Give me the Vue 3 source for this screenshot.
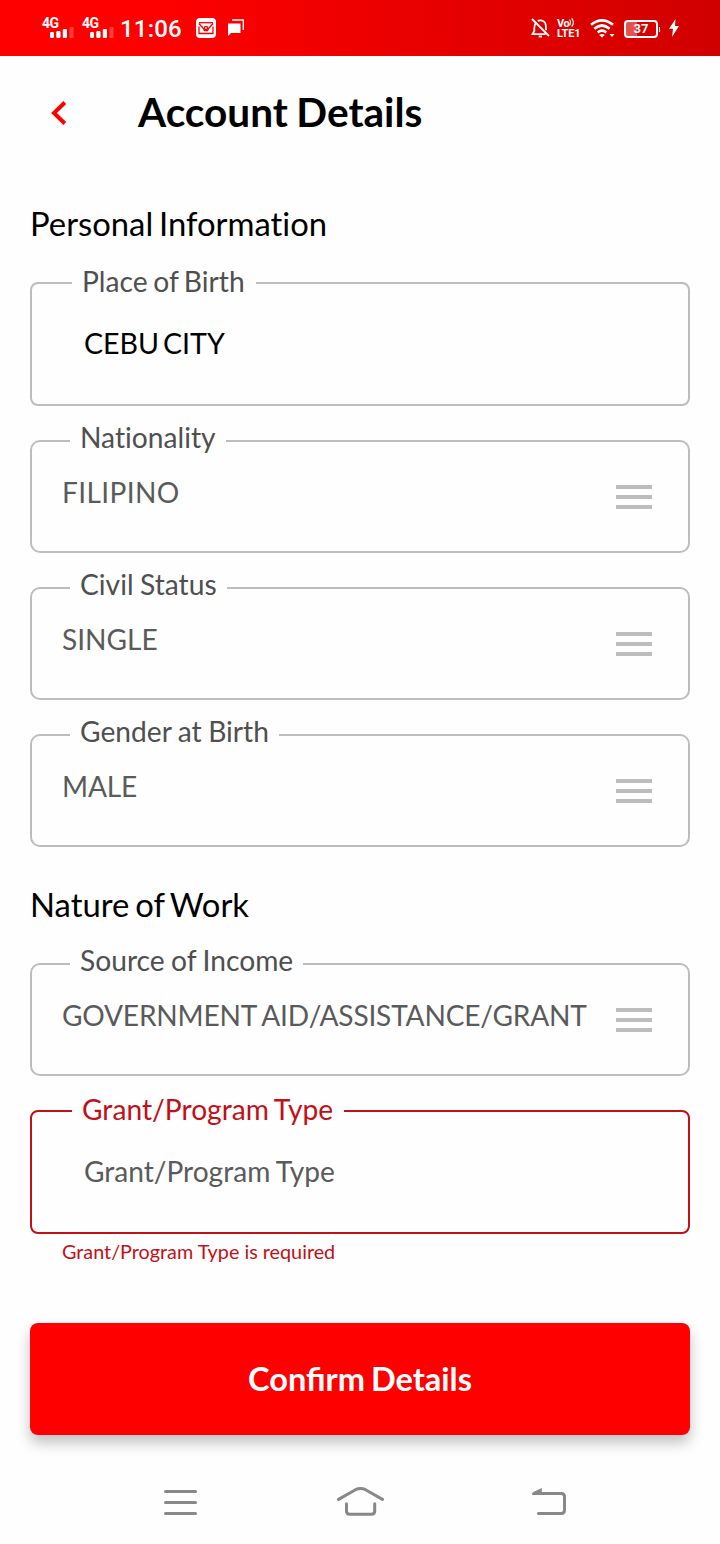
<script setup>
const personal = [
  { kind: 'input', label: 'Place of Birth', value: 'CEBU CITY', filled: true },
  { kind: 'select', label: 'Nationality', value: 'FILIPINO', tracking: 0.36 },
  { kind: 'select', label: 'Civil Status', value: 'SINGLE' },
  { kind: 'select', label: 'Gender at Birth', value: 'MALE', tracking: -0.2 },
]
const work = [
  { kind: 'select', label: 'Source of Income', value: 'GOVERNMENT AID/ASSISTANCE/GRANT', tracking: -0.2 },
  { kind: 'input', label: 'Grant/Program Type', value: 'Grant/Program Type', error: 'Grant/Program Type is required' },
]
const sections = [
  { title: 'Personal Information', fields: personal },
  { title: 'Nature of Work', fields: work },
]
</script>

<template>
  <div class="screen">
    <div class="status">
      <div v-for="n in 2" :key="n" class="signal">
        <span class="net">4G</span>
        <svg class="bars" width="24" height="11" viewBox="0 0 24 11" fill="#fff">
          <rect x="0" y="5" width="4" height="6" rx="1.2" />
          <rect x="6.3" y="4" width="4.2" height="7" rx="1.2" />
          <rect x="12.8" y="2" width="4.2" height="9" rx="1.2" />
          <rect x="19.5" y="0" width="4" height="11" rx="1.2" opacity=".25" />
        </svg>
      </div>
      <span class="time">11:06</span>
      <svg class="mail" width="20" height="20" viewBox="0 0 20 20">
        <rect width="20" height="20" rx="4" fill="#fff" />
        <g fill="none" stroke="#f40000" stroke-width="1.3">
          <path d="M3 4.7H17" />
          <path d="M2.8 5.5L7 10L8.5 12.5H11.5L13 10L17.2 5.5" />
          <path d="M3 8.5V15.5H17V8.5" />
          <circle cx="10" cy="10" r="1.6" />
        </g>
      </svg>
      <svg class="chat" width="17" height="17" viewBox="0 0 17 17">
        <path d="M0 4.5H12.5V14H3L0 17Z" fill="#fff" />
        <path d="M4 1H15.3V11" fill="none" stroke="#fff" stroke-width="1.3" />
      </svg>
      <span class="grow"></span>
      <svg class="bell" width="19" height="20" viewBox="0 0 19 20" fill="none" stroke="#fff" stroke-width="1.8">
        <path d="M1 1L18 18M5 4.7C3.5 6.2 3.3 8 3.3 10V13L1.5 16.2H14.5M6.7 3C8 2 11.8 1.9 13.7 4.2C15.2 6 15 8.3 15 12.2" />
        <path d="M7.6 18.5H11" />
      </svg>
      <div class="volte">
        <span class="vo">Vo<svg width="6" height="9" viewBox="0 0 6 9" fill="none" stroke="#fff" stroke-width="1.1"><path d="M.5 1.5Q2.5 4.5 .5 7.5M2.7 .3Q6 4.5 2.7 8.7" /></svg></span>
        <span class="lte">LTE1</span>
      </div>
      <svg class="wifi" width="25" height="19" viewBox="0 0 25 19" fill="none" stroke="#fff" stroke-width="2.7">
        <path d="M1 5.8Q12 -2.9 23 5.8" />
        <path d="M4.3 9.7Q12 3.3 19.7 9.7" />
        <path d="M7.7 13.5Q12 9.8 16.3 13.5" />
        <path d="M9.2 16Q12 13.8 14.8 16L12 18.5Z" fill="#fff" stroke="none" />
        <path d="M19.5 15H24.5L22 18Z" fill="#fff" stroke="none" />
      </svg>
      <div class="battery"><span>37</span></div>
      <svg class="bolt" width="10" height="18" viewBox="0 0 10 18"><path d="M6.5 0L0 9.7H4L3 18L10 7H6Z" fill="#fff" /></svg>
    </div>

    <header class="header">
      <svg width="16" height="24" viewBox="0 0 16 24" fill="none" stroke="#f00" stroke-width="4"><path d="M13.8 1.5L3 12L13.8 22.5" /></svg>
      <h1>Account Details</h1>
    </header>

    <main>
      <section v-for="s in sections" :key="s.title">
        <h2>{{ s.title }}</h2>
        <div class="fields">
          <div v-for="f in s.fields" :key="f.label">
            <div class="field" :class="[f.kind, { invalid: f.error, filled: f.filled }]">
              <label>{{ f.label }}</label>
              <span class="value" :style="{ letterSpacing: (f.tracking || 0) + 'px' }">{{ f.value }}</span>
              <svg v-if="f.kind === 'select'" class="menu" width="36" height="24" fill="#bdbdbd">
                <rect width="36" height="4" /><rect y="10" width="36" height="4" /><rect y="20" width="36" height="4" />
              </svg>
            </div>
            <p v-if="f.error" class="helper">{{ f.error }}</p>
          </div>
        </div>
      </section>
      <button class="confirm">Confirm Details</button>
    </main>

    <nav class="nav">
      <svg width="34" height="26" viewBox="0 0 34 26"><path d="M2.5 1.5H32.5M2.5 12.5H32.5M2.5 23.5H32.5" /></svg>
      <svg width="48" height="30" viewBox="0 0 48 30"><path d="M1.5 13.4L18.5 3.7Q23.5 1.2 28.5 3.7L45.5 13.4M9.5 17.7V25Q9.5 28.3 12.7 28.3H34.5Q37.7 28.3 37.7 25V17.7" /></svg>
      <svg width="35" height="28" viewBox="0 0 35 28"><path d="M6 5.5H29.3Q32.5 5.5 32.5 8.7V22.3Q32.5 25.5 29.3 25.5H6.5" /><path d="M0 6.2Q0 5 1 4.3L9.8 0V7H1Q0 7 0 6.2Z" class="head" /></svg>
    </nav>
  </div>
</template>

<style>
body { background: #fefefe; }
</style>

<style scoped>
* { box-sizing: border-box; }
.screen { width: 720px; height: 1544px; background: #fefefe; font-family: Lato, sans-serif; font-variant-ligatures: none; display: flex; flex-direction: column; overflow: hidden; }
.status { height: 56px; display: flex; align-items: flex-start; padding: 0 41px 0 42px; background: linear-gradient(90deg, #f00 20%, #d00000); color: #fff; font-family: Roboto, sans-serif; }
.signal { width: 40px; padding-top: 17px; display: flex; flex-direction: column; }
.net { font-size: 14px; font-weight: 700; line-height: 12px; height: 10px; letter-spacing: -.6px; }
.bars { margin-left: 8px; }
.time { font-size: 24px; font-weight: 500; line-height: 28px; margin: 15px 0 0 -2px; width: 76px; white-space: nowrap; letter-spacing: .2px; }
.mail { margin-top: 18px; }
.chat { margin: 19px 0 0 12px; }
.grow { flex: 1; }
.bell { margin: 18px 1px 0 0; }
.volte { margin: 18px 0 0 6px; width: 25px; font-weight: 700; display: flex; flex-direction: column; }
.vo { font-size: 11px; line-height: 10px; height: 10px; white-space: nowrap; letter-spacing: -.5px; }
.lte { font-size: 11px; line-height: 11px; letter-spacing: -.2px; }
.wifi { margin: 19px 0 0 8px; }
.battery { position: relative; margin: 20px 0 0 9px; width: 34px; height: 18px; border: 2px solid #fff; border-radius: 4px; background: linear-gradient(90deg, #e65050 37%, transparent 37%); display: flex; align-items: center; justify-content: center; font: 700 13px/16px Roboto, sans-serif; }
.battery::after { content: ''; position: absolute; right: -4px; top: 5px; width: 1px; height: 5px; background: #fff; }
.bolt { margin: 19px 0 0 11px; }
.header { height: 112px; padding-left: 51px; display: flex; align-items: center; gap: 71px; }
.header svg { margin-top: 2px; }
h1 { margin: 0; font-size: 40.6px; line-height: 48px; font-weight: 700; word-spacing: -1.4px; color: #000; }
main { padding: 0 30px; display: flex; flex-direction: column; }
section { padding-top: 36px; }
section + section { padding-top: 38px; }
h2 { margin: 0 0 38px; font-size: 32.8px; line-height: 40px; font-weight: 400; word-spacing: -2.5px; color: #000; }
.fields { display: flex; flex-direction: column; gap: 34px; }
.field { position: relative; border: 2px solid #bdbdbd; color: #5a5a5a; display: flex; justify-content: space-between; }
.input { height: 124px; border-radius: 8px; padding: 41px 52px 0; }
.select { height: 113px; border-radius: 10px; padding: 32px 36px 0 30px; }
label { position: absolute; left: 38px; top: -22px; padding: 0 10px; background: #fefefe; font-size: 28.2px; line-height: 34px; color: #4f4f4f; white-space: nowrap; word-spacing: -.8px; }
.input label { left: 40px; top: -20px; word-spacing: -1.6px; padding-right: 11px; }
.value { font-size: 28.1px; line-height: 36px; white-space: nowrap; word-spacing: -1px; }
.filled .value { font-size: 28.6px; word-spacing: -3.5px; color: #000; }
.menu { margin-top: 11px; flex: none; }
.invalid { border-color: #c01018; }
.invalid label { color: #c01018; }
.helper { margin: 5px 0 1px 32px; font-size: 19.8px; line-height: 24px; color: #c01018; }
.confirm { margin-top: 59px; height: 112px; padding: 0; border: 0; border-radius: 8px; background: #f00; color: #fff; font: 700 32.6px/40px Lato, sans-serif; font-variant-ligatures: common-ligatures; word-spacing: -2px; box-shadow: 0 8px 14px rgba(0, 0, 0, .24); }
.nav { margin-top: 51px; display: flex; align-items: flex-start; padding-left: 163px; }
.nav svg { fill: none; stroke: #888; stroke-width: 3; stroke-linecap: round; }
.nav svg:nth-child(1) { margin-top: 4px; }
.nav svg:nth-child(2) { margin-left: 140px; }
.nav svg:nth-child(3) { margin: 2px 0 0 147px; }
.nav .head { fill: #888; stroke: none; }
</style>
